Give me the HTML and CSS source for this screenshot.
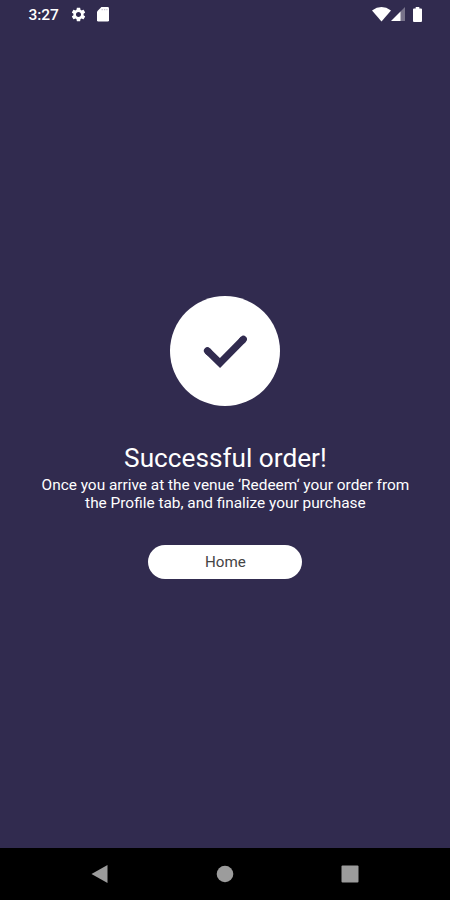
FILE: index.html
```
<!DOCTYPE html>
<html lang="en">
<head>
    <meta charset="UTF-8">
    <meta name="viewport" content="width=device-width, initial-scale=1.0">
    <title>Successful order</title>
    <link rel="stylesheet" href="styles.css">
</head>
<body>
    <div class="screen">
        <div class="status-bar">
            <span class="time">3:27</span>
            <svg class="gear" width="17" height="17" viewBox="0 0 24 24">
                <path d="M19.14 12.94c.04-.3.06-.61.06-.94s-.02-.64-.07-.94l2.03-1.58c.18-.14.23-.41.12-.61l-1.92-3.32c-.12-.22-.37-.29-.59-.22l-2.39.96c-.5-.38-1.03-.7-1.62-.94l-.36-2.54c-.04-.24-.24-.41-.48-.41h-3.84c-.24 0-.43.17-.47.41l-.36 2.54c-.59.24-1.13.57-1.62.94l-2.39-.96c-.22-.08-.47 0-.59.22L2.74 8.87c-.12.21-.08.47.12.61l2.03 1.58c-.05.3-.09.63-.09.94s.02.64.07.94l-2.03 1.58c-.18.14-.23.41-.12.61l1.92 3.32c.12.22.37.29.59.22l2.39-.96c.5.38 1.03.7 1.62.94l.36 2.54c.05.24.24.41.48.41h3.84c.24 0 .44-.17.47-.41l.36-2.54c.59-.24 1.13-.56 1.62-.94l2.39.96c.22.08.47 0 .59-.22l1.92-3.32c.12-.22.07-.47-.12-.61l-2.01-1.58zM12 15.6c-1.98 0-3.6-1.62-3.6-3.6s1.62-3.6 3.6-3.6 3.6 1.62 3.6 3.6-1.62 3.6-3.6 3.6z"/>
            </svg>
            <svg class="card" width="12" height="15" viewBox="0 0 12 15">
                <path d="M4.4 0H10.6Q12 0 12 1.4V13.2Q12 14.5 10.6 14.5H1.4Q0 14.5 0 13.2V4.4Z"/>
                <path class="slots" d="M4.5 2.6H10.5"/>
            </svg>
            <div class="signals">
                <svg width="19" height="15" viewBox="0 0 19 15">
                    <path d="M0 3.4Q9.5-3.4 19 3.4L9.5 14.6Z"/>
                </svg>
                <svg width="14" height="14" viewBox="0 0 14 14">
                    <path class="faint" d="M14 0V14H9V5Z"/>
                    <path d="M0 14L9.5 4.5V14Z"/>
                </svg>
                <svg class="battery" width="9" height="15" viewBox="0 0 9 15">
                    <path d="M2.7 0H6.3V1.6H8Q9 1.6 9 2.6V14Q9 15 8 15H1Q0 15 0 14V2.6Q0 1.6 1 1.6H2.7Z"/>
                </svg>
            </div>
        </div>

        <div class="content">
            <div class="circle">
                <svg width="44" height="34" viewBox="0 0 44 34">
                    <path class="check" d="M4.4 16.8L17 29L40.4 5.2"/>
                    <path class="ends" d="M4.4 16.8L5.4 17.8M39.4 6.2L40.4 5.2"/>
                </svg>
            </div>
            <h1>Successful order!</h1>
            <p>Once you arrive at the venue ‘Redeem‘ your order from<br>the Profile tab, and finalize your purchase</p>
            <button class="btn">Home</button>
        </div>

        <div class="nav-bar">
            <svg width="18" height="20" viewBox="0 0 18 20">
                <path d="M16.5 1V19L.5 10Z"/>
            </svg>
            <svg width="18" height="18" viewBox="0 0 18 18">
                <circle cx="9" cy="9" r="8.3"/>
            </svg>
            <svg width="18" height="18" viewBox="0 0 18 18">
                <rect x="0.5" y="0.5" width="17" height="17" rx="1"/>
            </svg>
        </div>
    </div>
</body>
</html>
```
FILE: styles.css
```
body{
    margin: 0;
    font-family: Roboto, "Liberation Sans", sans-serif;
    color: white;
}
svg{
    display: block;
    fill: white;
}
.screen{
    display: flex;
    flex-direction: column;
    height: 900px;
    background-color: #312b4f;
}
.status-bar{
    display: flex;
    align-items: center;
    height: 28px;
    padding: 0 28px 0 28.4px;
}
.time{
    width: 42px;
    font-size: 15.5px;
    font-weight: 500;
    line-height: 20px;
    padding-top: 1px;
}
.card{
    margin-left: 10px;
}
.slots{
    fill: none;
    stroke: #c9c7d3;
    stroke-width: 1.4;
    stroke-dasharray: 1.4 1;
}
.signals{
    display: flex;
    align-items: center;
    margin-left: auto;
}
.faint{
    fill: #77728a;
}
.battery{
    margin-left: 8px;
}
.content{
    flex: 1;
    display: flex;
    flex-direction: column;
    align-items: center;
    padding: 268px 0 0 0.8px;
}
.circle{
    display: flex;
    align-items: center;
    justify-content: center;
    width: 110px;
    height: 110px;
    border-radius: 50%;
    background-color: white;
}
.check,
.ends{
    fill: none;
    stroke: #312b4f;
    stroke-width: 7;
}
.ends{
    stroke-linecap: round;
}
h1{
    margin: 35px 0 0;
    font-size: 26.2px;
    font-weight: 400;
    line-height: 34px;
}
p{
    margin: 1px 0 0;
    font-size: 15.4px;
    line-height: 18px;
    text-align: center;
    white-space: nowrap;
}
.btn{
    width: 154px;
    height: 34px;
    margin-top: 32.5px;
    padding: 1px 0 0;
    border: none;
    border-radius: 17px;
    background-color: white;
    color: #444;
    font-family: inherit;
    font-size: 15.2px;
}
.nav-bar{
    display: flex;
    align-items: center;
    justify-content: space-between;
    height: 52px;
    padding: 0 91px;
    background-color: black;
}
.nav-bar svg{
    fill: #9c9c9c;
}
```
